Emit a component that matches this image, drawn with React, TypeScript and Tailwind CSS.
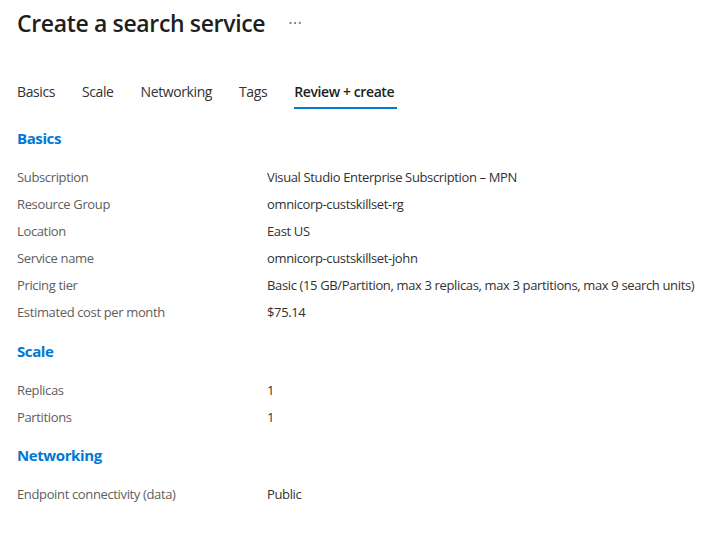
import { MoreHorizontal } from 'lucide-react'

type Row = { label: string; value: string }

const sections: { title: string; rows: Row[] }[] = [
  {
    title: 'Basics',
    rows: [
      { label: 'Subscription', value: 'Visual Studio Enterprise Subscription – MPN' },
      { label: 'Resource Group', value: 'omnicorp-custskillset-rg' },
      { label: 'Location', value: 'East US' },
      { label: 'Service name', value: 'omnicorp-custskillset-john' },
      {
        label: 'Pricing tier',
        value: 'Basic (15 GB/Partition, max 3 replicas, max 3 partitions, max 9 search units)',
      },
      { label: 'Estimated cost per month', value: '$75.14' },
    ],
  },
  {
    title: 'Scale',
    rows: [
      { label: 'Replicas', value: '1' },
      { label: 'Partitions', value: '1' },
    ],
  },
  {
    title: 'Networking',
    rows: [{ label: 'Endpoint connectivity (data)', value: 'Public' }],
  },
]

const tabs = ['Basics', 'Scale', 'Networking', 'Tags', 'Review + create']

// spacing above each section header, tuned against the reference
const sectionGap = ['mt-[19px]', 'mt-[15px]', 'mt-[14px]']

export default function App() {
  return (
    <div className="min-h-screen bg-white px-[17px] font-['Open_Sans',sans-serif] text-[#323130]">
      <div className="flex h-[45px] items-center">
        <h1 className="text-[23px] font-semibold leading-8 tracking-[-0.35px] text-[#201f1e]">
          Create a search service
        </h1>
        <MoreHorizontal className="ml-[22px] h-4 w-4 text-[#605e5c]" strokeWidth={1.2} />
      </div>

      <div className="mt-[31px] flex gap-[27px] text-[14px] tracking-[-0.4px]">
        {tabs.map((t, i) => {
          const active = i === tabs.length - 1
          return (
            <div
              key={t}
              className={
                active
                  ? 'flex h-[33px] items-start border-b-2 border-[#0078d4] pt-[5px] pr-[3px] font-semibold text-[#201f1e]'
                  : 'flex h-[33px] items-start pt-[5px] text-[#323130]'
              }
            >
              {t}
            </div>
          )
        })}
      </div>

      {sections.map((s, i) => (
        <section key={s.title} className={sectionGap[i]}>
          <h2 className="h-5 text-[15px] font-bold leading-5 tracking-[-0.4px] text-[#0078d4]">
            {s.title}
          </h2>
          <div className="mt-[16px]">
            {s.rows.map((r) => (
              <div key={r.label} className="flex h-[27px] items-center text-[13px] tracking-[-0.36px]">
                <div className="w-[250px] shrink-0 text-[#605e5c]">{r.label}</div>
                <div className="whitespace-nowrap text-[#323130]">{r.value}</div>
              </div>
            ))}
          </div>
        </section>
      ))}
    </div>
  )
}
